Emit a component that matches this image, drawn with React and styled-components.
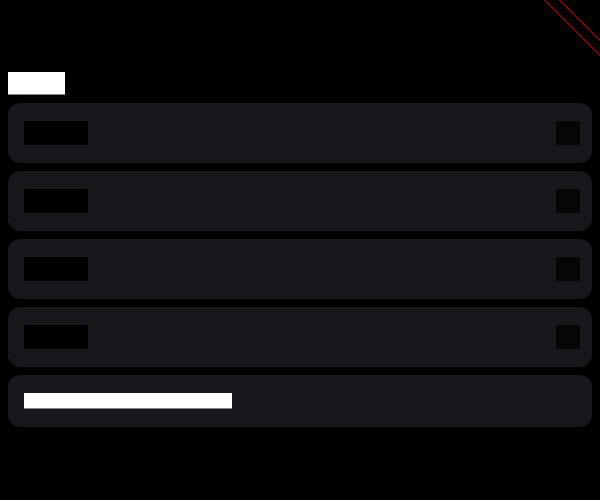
import React from "react";
import styled, { createGlobalStyle } from "styled-components";

const Global = createGlobalStyle`
  html, body { margin: 0; padding: 0; background: #000; }
  body { font-family: "Liberation Sans", Arial, sans-serif; }
`;

const Page = styled.div`
  position: relative;
  width: 600px;
  height: 500px;
  overflow: hidden;
  background: #000;
  box-sizing: border-box;
  padding: 72px 8px 0 8px;
  display: flex;
  flex-direction: column;
`;

const Ribbon = styled.svg`
  position: absolute;
  top: 0;
  right: 0;
  width: 60px;
  height: 60px;
`;

const Title = styled.div`
  width: 57px;
  height: 23px;
  background: #fff;
  border-bottom: 1px solid #888;
  box-sizing: border-box;
  margin-bottom: 8px;
`;

const List = styled.div`
  display: flex;
  flex-direction: column;
  gap: 8px;
`;

const Card = styled.div`
  background: #16171b;
  border-radius: 12px;
  padding: 18px 12px 18px 16px;
  display: flex;
  align-items: center;
  justify-content: space-between;
  height: ${(p) => (p.$short ? "52px" : "60px")};
  box-sizing: border-box;
`;

const Label = styled.div`
  width: 64px;
  height: 24px;
  background: #000;
`;

const Toggle = styled.div`
  width: 24px;
  height: 24px;
  background: #060606;
`;

const Bar = styled.div`
  width: 208px;
  height: 16px;
  background: #fff;
  border-bottom: 1px solid #888;
  box-sizing: border-box;
`;

export default function App() {
  return (
    <>
      <Global />
      <Page>
        <Ribbon viewBox="540 0 60 60" shapeRendering="crispEdges">
          <line x1="544.5" y1="0" x2="604.5" y2="60" stroke="#8b0000" strokeWidth="1" />
          <line x1="559.5" y1="0" x2="619.5" y2="60" stroke="#8b0000" strokeWidth="1" />
        </Ribbon>
        <Title />
        <List>
          {[0, 1, 2, 3].map((i) => (
            <Card key={i}>
              <Label />
              <Toggle />
            </Card>
          ))}
          <Card $short>
            <Bar />
          </Card>
        </List>
      </Page>
    </>
  );
}
